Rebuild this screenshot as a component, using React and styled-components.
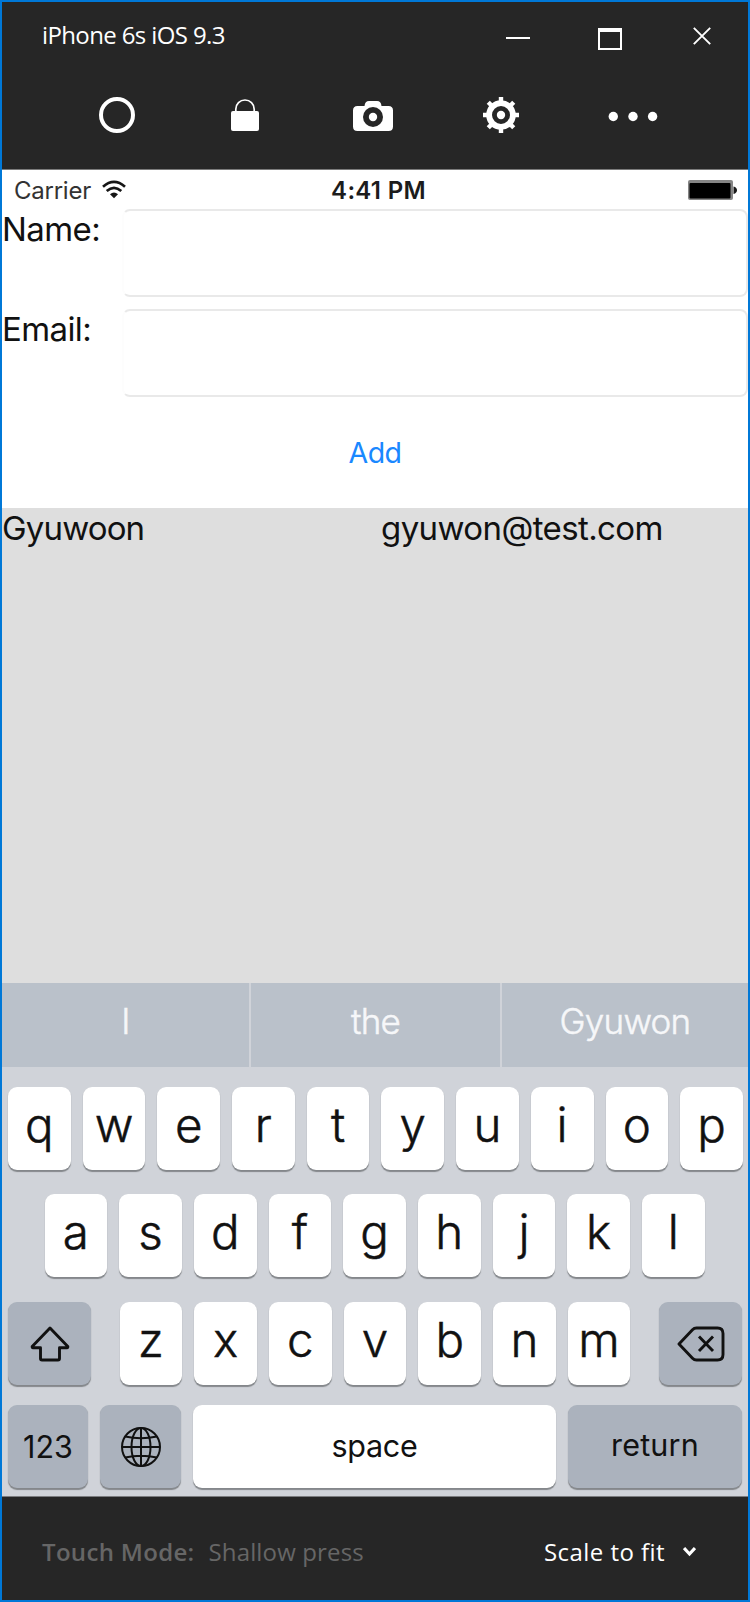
import React from "react";
import styled, { createGlobalStyle } from "styled-components";

const GlobalStyle = createGlobalStyle`
  *, *::before, *::after { box-sizing: border-box; }
  body { margin: 0; background: #262626; }
  button, input { font: inherit; color: inherit; margin: 0; padding: 0; border: 0; background: none; outline: none; }
  svg { display: block; flex: none; }
`;

const Window = styled.div`
  width: 750px;
  height: 1602px;
  border: 2px solid #0078d7;
  background: #262626;
  color: #fff;
  font: 400 24px/32px "Open Sans", "Noto Sans", sans-serif;
  display: flex;
  flex-direction: column;
  overflow: hidden;
`;

/* Simulator window chrome */
const TitleBar = styled.header`
  height: 65px;
  padding: 0 37px 0 40px;
  display: flex;
  align-items: center;
`;
const Title = styled.h1`
  margin: 0 auto 0 0;
  font: inherit;
  letter-spacing: -0.62px;
`;
const WindowButtons = styled.div`
  display: flex;
  align-items: center;
  gap: 68px;
`;
const WindowButton = styled.button`
  display: flex;
  &:last-child { margin: 2px 0 0 3px; }
`;
const Toolbar = styled.nav`
  height: 102px;
  padding: 0 0 6px 51px;
  display: flex;
`;
const ToolButton = styled.button`
  width: ${(p) => (p.$wide ? 136 : 128)}px;
  display: flex;
  align-items: center;
  justify-content: center;
`;

/* Phone screen */
const Screen = styled.main`
  height: 1328px;
  flex: none;
  border-top: 1px solid #7b7b7b;
  border-bottom: 1px solid #7b7c7f;
  background: #fff;
  color: #111;
  font-family: Inter, "Liberation Sans", sans-serif;
  display: flex;
  flex-direction: column;
`;
const StatusBar = styled.div`
  height: 39px;
  padding: 0 11px 0 12px;
  display: grid;
  grid-template-columns: 1fr auto 1fr;
  align-items: center;
  line-height: 37px;
`;
const Carrier = styled.div`
  display: flex;
  align-items: center;
  gap: 11px;
  color: #333;
  letter-spacing: -0.25px;
`;
const CarrierName = styled.span`
  padding-top: 2px;
`;
const Clock = styled.div`
  padding: 2px 0 0 6px;
  font-weight: 600;
  letter-spacing: 0.3px;
  color: #1c1c1c;
`;
const Battery = styled.div`
  display: flex;
  justify-content: flex-end;
`;
const Form = styled.form`
  display: flex;
  flex-direction: column;
  gap: 12px;
`;
const Field = styled.label`
  height: 88px;
  display: grid;
  grid-template-columns: 120px 1fr;
  font-size: 33px;
  line-height: 40px;
  letter-spacing: -0.6px;
`;
const TextInput = styled.input`
  width: 100%;
  height: 88px;
  border: 2px solid #e9e9e9;
  border-left-color: #fdfdfd;
  border-radius: 8px;
`;
const AddButton = styled.button`
  height: 111px;
  color: #1a88ff;
  font-size: 28.5px;
  letter-spacing: -0.6px;
  text-align: center;
`;
const ContactList = styled.section`
  flex: 1;
  background: #dedede;
`;
const Contact = styled.div`
  display: grid;
  grid-template-columns: 1fr 1fr;
  column-gap: 12px;
  font-size: 33px;
  line-height: 40px;
`;
const ContactName = styled.span`
  letter-spacing: -0.85px;
`;
const ContactEmail = styled.span`
  letter-spacing: -0.6px;
`;

/* Software keyboard */
const Suggestions = styled.div`
  height: 84px;
  display: grid;
  grid-template-columns: 247px 251px 1fr;
  background: #bac1ca;
`;
const Suggestion = styled.button`
  padding-bottom: 8px;
  color: #f6f7f9;
  font-size: 35px;
  font-weight: 300;
  -webkit-text-stroke: 0.5px currentColor;
  letter-spacing: -0.75px;
  & + & { border-left: 2px solid #d0d3d9; }
`;
const Keyboard = styled.div`
  height: 429px;
  padding: 20px 6px 0;
  background: #d0d3d9;
`;
const KeyRow = styled.div`
  display: flex;
  justify-content: ${(p) => (p.$spread ? "space-between" : "flex-start")};
  gap: ${(p) => (p.$spread ? 0 : 12)}px;
  padding: 0 ${(p) => p.$inset || 0}px;
  margin-bottom: ${(p) => p.$below || 0}px;
`;
const LetterGroup = styled.div`
  display: flex;
  gap: 12px;
`;
const Key = styled.button`
  height: 83px;
  width: 62.7px;
  flex: none;
  border-radius: 9px;
  background: #fff;
  color: #111;
  box-shadow: 0 1.5px 1px #84878b;
  font-size: 47.5px;
  font-weight: 300;
  -webkit-text-stroke: 0.5px currentColor;
  line-height: 76px;
  display: flex;
  justify-content: center;
`;
const WordKey = styled(Key)`
  width: ${(p) => p.$w}px;
  font-size: 30.5px;
  font-weight: 400;
  -webkit-text-stroke: 0;
  line-height: 81px;
  letter-spacing: ${(p) => p.$track || 0}px;
`;
const FunctionKey = styled(WordKey)`
  background: #abb2bd;
  align-items: center;
  line-height: 83px;
  padding-bottom: ${(p) => p.$lift || 0}px;
`;

/* Bottom bar */
const Footer = styled.footer`
  flex: 1;
  padding: 6px 52px 0 40px;
  display: flex;
  align-items: center;
`;
const ModeLabel = styled.span`
  font-weight: 600;
  letter-spacing: 0.32px;
  color: #666;
`;
const ModeValue = styled.span`
  margin: 0 auto 0 14px;
  letter-spacing: 0.15px;
  color: #666;
`;
const ScaleSelect = styled.button`
  display: flex;
  align-items: center;
  gap: 18px;
  letter-spacing: 0.45px;
`;

const MinimizeIcon = () => (
  <svg width="24" height="22"><rect y="13" width="24" height="2" fill="#fff" /></svg>
);
const MaximizeIcon = () => (
  <svg width="24" height="31"><path d="M0 9H24V31H0ZM2 13V29H22V13Z" fill="#fff" fillRule="evenodd" /></svg>
);
const CloseIcon = () => (
  <svg width="18" height="18" viewBox="0 0 18 18"><path d="M.8.8 17.2 17.2M17.2.8.8 17.2" stroke="#fff" strokeWidth="1.9" /></svg>
);
const HomeIcon = () => (
  <svg width="40" height="40"><circle cx="20" cy="20" r="16" fill="none" stroke="#fff" strokeWidth="4" /></svg>
);
const LockIcon = () => (
  <svg width="40" height="40">
    <path d="M10.8 17V14.2a9.2 9.2 0 0 1 18.4 0V17" fill="none" stroke="#fff" strokeWidth="1.7" />
    <rect x="6" y="16" width="28" height="20" rx="2" fill="#fff" />
  </svg>
);
const CameraIcon = () => (
  <svg width="40" height="40">
    <path d="M4.500 11H11.500Q12 6 16 6H24Q28 6 28.500 11H35.500Q40 11 40 15.500V31.500Q40 36 35.500 36H4.500Q0 36 0 31.500V15.500Q0 11 4.500 11Z" fill="#fff" />
    <circle cx="20" cy="22" r="10" fill="#262626" />
    <circle cx="20" cy="22" r="4.200" fill="#fff" />
  </svg>
);
const GearIcon = () => (
  <svg width="40" height="40" viewBox="-20 -20 40 40">
    <circle r="11.900" fill="none" stroke="#fff" strokeWidth="5.800" />
    {[0, 45, 90, 135].map((a) => (
      <path key={a} d="M0-18V-12M0 12V18" stroke="#fff" strokeWidth="4.400" transform={`rotate(${a})`} />
    ))}
    <circle r="4.200" fill="#fff" />
  </svg>
);
const MoreIcon = () => (
  <svg width="50" height="40">
    {[5.3, 25, 44.6].map((x) => <circle key={x} cx={x} cy="21.500" r="4.700" fill="#fff" />)}
  </svg>
);
const WifiIcon = () => (
  <svg width="24" height="19" viewBox="0 0 24 19">
    <g fill="none" stroke="#161616" strokeWidth="2.700">
      <path d="M1 6.700Q12-2.800 23 6.700" />
      <path d="M4.700 11Q12 4.700 19.300 11" />
    </g>
    <path d="M8 14.200Q12 10.800 16 14.200L12 18.300Z" fill="#161616" />
  </svg>
);
const BatteryIcon = () => (
  <svg width="49" height="20" viewBox="0 0 49 20">
    <rect width="45" height="20" rx="2" fill="#858585" />
    <rect x="1.500" y="3" width="41" height="15.500" rx="1" fill="#000" />
    <path d="M45.500 6.500Q49 7.500 49 10.300T45.500 14Z" fill="#1a1a1a" />
  </svg>
);
const ShiftIcon = () => (
  <svg width="40" height="36" viewBox="0 0 40 36">
    <path d="M20 2 37.800 20.500Q38 21.700 37 21.700H29.500V32.500Q29.500 34 28 34H12Q10.500 34 10.500 32.500V21.700H3Q2 21.700 2.200 20.500Z" fill="none" stroke="#111" strokeWidth="2.900" strokeLinejoin="round" />
  </svg>
);
const BackspaceIcon = () => (
  <svg width="48" height="36" viewBox="0 0 48 36">
    <g fill="none" stroke="#111" strokeWidth="2.900" strokeLinejoin="round">
      <path d="M2 18 15.500 3.800Q17.200 2 19.500 2H40.500Q46 2 46 7.500V28.500Q46 34 40.500 34H19.500Q17.200 34 15.500 32.200Z" />
      <path d="M22 10.500 36 25M36 10.500 22 25" />
    </g>
  </svg>
);
const GlobeIcon = () => (
  <svg width="42" height="42" viewBox="-21 -21 42 42">
    <g fill="none" stroke="#111" strokeWidth="2">
      <circle r="19" />
      <ellipse rx="9.500" ry="19" />
      <path d="M0-19V19M-19 0H19M-16-10.500Q0-7 16-10.500M-16 10.500Q0 7 16 10.500" />
    </g>
  </svg>
);
const ChevronIcon = () => (
  <svg width="13" height="12" viewBox="0 0 13 12"><path d="M1 2 6.500 8 12 2" fill="none" stroke="#fff" strokeWidth="3.200" /></svg>
);

const letters = (text) => [...text].map((c) => <Key key={c} type="button">{c}</Key>);

export default function App() {
  return (
    <Window>
      <GlobalStyle />
      <TitleBar>
        <Title>iPhone 6s iOS 9.3</Title>
        <WindowButtons>
          <WindowButton aria-label="Minimize"><MinimizeIcon /></WindowButton>
          <WindowButton aria-label="Maximize"><MaximizeIcon /></WindowButton>
          <WindowButton aria-label="Close"><CloseIcon /></WindowButton>
        </WindowButtons>
      </TitleBar>
      <Toolbar>
        <ToolButton aria-label="Home"><HomeIcon /></ToolButton>
        <ToolButton aria-label="Lock"><LockIcon /></ToolButton>
        <ToolButton aria-label="Screenshot"><CameraIcon /></ToolButton>
        <ToolButton aria-label="Settings"><GearIcon /></ToolButton>
        <ToolButton aria-label="More" $wide><MoreIcon /></ToolButton>
      </Toolbar>

      <Screen>
        <StatusBar>
          <Carrier><CarrierName>Carrier</CarrierName><WifiIcon /></Carrier>
          <Clock>4:41 PM</Clock>
          <Battery><BatteryIcon /></Battery>
        </StatusBar>
        <Form>
          <Field>Name:<TextInput /></Field>
          <Field>Email:<TextInput /></Field>
        </Form>
        <AddButton type="button">Add</AddButton>
        <ContactList>
          <Contact>
            <ContactName>Gyuwoon</ContactName>
            <ContactEmail>gyuwon@test.com</ContactEmail>
          </Contact>
        </ContactList>
        <Suggestions>
          <Suggestion>I</Suggestion>
          <Suggestion>the</Suggestion>
          <Suggestion>Gyuwon</Suggestion>
        </Suggestions>
        <Keyboard>
          <KeyRow $below={24}>{letters("qwertyuiop")}</KeyRow>
          <KeyRow $inset={36.5} $below={25}>{letters("asdfghjkl")}</KeyRow>
          <KeyRow $spread $below={20}>
            <FunctionKey $w={83} aria-label="Shift"><ShiftIcon /></FunctionKey>
            <LetterGroup>{letters("zxcvbnm")}</LetterGroup>
            <FunctionKey $w={83} aria-label="Delete"><BackspaceIcon /></FunctionKey>
          </KeyRow>
          <KeyRow $spread>
            <FunctionKey $w={80}>123</FunctionKey>
            <FunctionKey $w={81} aria-label="Next keyboard"><GlobeIcon /></FunctionKey>
            <WordKey $w={363} $track={-0.3}>space</WordKey>
            <FunctionKey $w={174} $track={0.2} $lift={4}>return</FunctionKey>
          </KeyRow>
        </Keyboard>
      </Screen>

      <Footer>
        <ModeLabel>Touch Mode:</ModeLabel>
        <ModeValue>Shallow press</ModeValue>
        <ScaleSelect>Scale to fit <ChevronIcon /></ScaleSelect>
      </Footer>
    </Window>
  );
}
